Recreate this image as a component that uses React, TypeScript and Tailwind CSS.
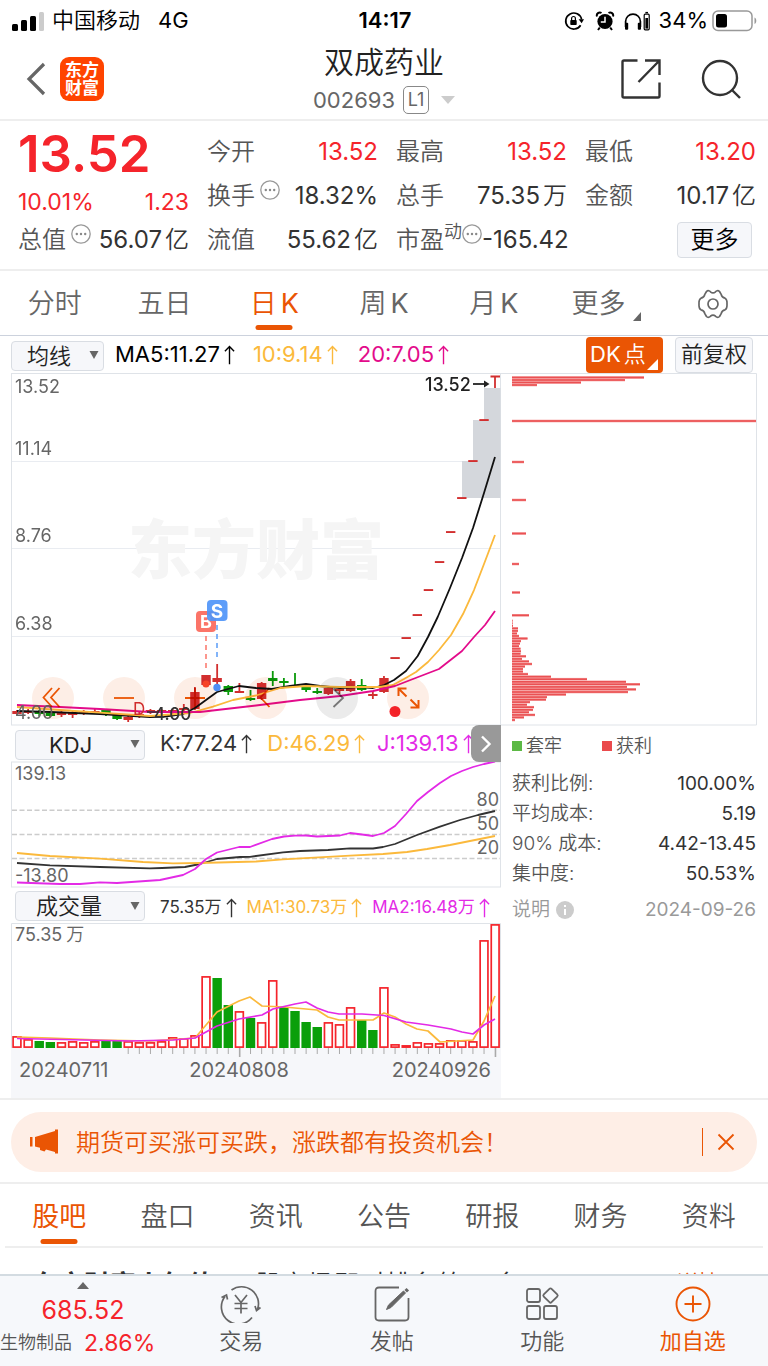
import React from 'react';

type Bar = [kind: 'r' | 'g', top: number];
type Candle = [index: number, kind: 'r' | 'g', bodyTop: number, bodyBottom: number, high: number, low: number];

const STEP = 11.12;
const px = (i: number) => 17 + STEP * i;

const RED = '#d22f2f';
const GREEN = '#0a9a0a';

const VOLUME: Bar[] = [
  ['r', 1036], ['r', 1039], ['g', 1041], ['g', 1042], ['r', 1042], ['r', 1041], ['r', 1042], ['r', 1041],
  ['g', 1041], ['g', 1041], ['r', 1041], ['r', 1042], ['r', 1042], ['r', 1041], ['r', 1037], ['r', 1038],
  ['r', 1035], ['r', 976], ['g', 978], ['g', 1005], ['r', 1011], ['g', 1018], ['r', 1022], ['r', 980],
  ['g', 1007], ['g', 1011], ['g', 1022], ['g', 1027], ['r', 1022], ['r', 1024], ['r', 1007], ['g', 1020],
  ['g', 1030], ['r', 987], ['r', 1044], ['r', 1045], ['r', 1042], ['r', 1043], ['r', 1043], ['r', 1040],
  ['r', 1040], ['r', 1041], ['r', 940], ['r', 924],
];

const CANDLES: Candle[] = [
  [0, 'r', 711, 714, 710, 715], [1, 'r', 711, 713, 709, 714], [2, 'g', 711, 714, 710, 716],
  [3, 'g', 713, 716, 712, 717], [4, 'r', 713, 715, 711, 717], [5, 'r', 713, 715, 711, 718],
  [6, 'r', 711, 713, 710, 715], [7, 'r', 711, 713, 709, 714], [8, 'g', 710, 715, 709, 716],
  [9, 'g', 715, 719, 713, 720], [10, 'r', 717, 720, 715, 722], [11, 'r', 714, 716, 712, 718],
  [12, 'r', 710, 712, 709, 714], [13, 'r', 710, 712, 709, 714], [14, 'r', 710, 713, 709, 714],
  [15, 'r', 708, 710, 704, 712], [16, 'r', 692, 709, 687, 710], [17, 'r', 675, 685, 675, 686],
  [18, 'r', 678, 682, 664, 691], [19, 'g', 686, 692, 685, 695], [20, 'r', 691, 693, 683, 693],
  [21, 'g', 698, 700, 690, 701], [22, 'r', 683, 699, 682, 700], [23, 'g', 678, 681, 671, 686],
  [24, 'g', 681, 683, 678, 687], [25, 'g', 685, 687, 673, 687], [26, 'g', 687, 690, 685, 692],
  [27, 'g', 691, 693, 688, 694], [28, 'r', 688, 694, 687, 695], [29, 'r', 689, 691, 686, 694],
  [30, 'r', 681, 691, 679, 692], [31, 'g', 685, 690, 679, 691], [32, 'r', 694, 696, 691, 699],
  [33, 'r', 678, 692, 676, 693],
];

const LIMIT_UP = [658, 638, 615, 590, 562, 532, 498, 461, 420];

const CHIPS: [number, number][] = [
  [377.5, 132], [380, 113], [382.5, 69], [385, 25], [421, 244], [462, 12], [500, 14], [533.5, 14],
  [564, 7], [592.5, 8], [615.3, 17], [620.7, 0.6], [623.3, 0.6], [625.8, 1], [628.4, 6], [630.9, 6],
  [633.5, 5], [636, 7], [638.5, 15.5], [641.1, 9], [643.6, 8], [646.2, 7], [648.7, 8.5], [651.3, 9],
  [653.8, 8.5], [656.3, 14], [658.9, 10], [661.4, 17], [664, 20], [666.5, 13], [669, 11], [671.6, 11],
  [674.1, 16], [676.7, 39], [679.2, 75], [681.8, 114], [684.3, 128], [686.9, 115], [689.4, 124],
  [692, 116], [694.5, 54], [697.1, 35], [699.6, 34], [702.1, 18], [704.7, 15], [707.2, 22],
  [709.8, 21], [712.3, 17], [714.9, 23], [717.4, 12], [720, 3],
];

const MORE_DOTS = (
  <svg viewBox="1 1 20 20" className="h-5 w-5 shrink-0" fill="none" aria-hidden="true">
    <circle cx="11" cy="11" r="9.2" stroke="#999" strokeWidth="1.3" />
    <circle cx="6.8" cy="11" r="1.2" fill="#888" />
    <circle cx="11" cy="11" r="1.2" fill="#888" />
    <circle cx="15.2" cy="11" r="1.2" fill="#888" />
  </svg>
);

function Caret() {
  return (
    <svg viewBox="0 0 10 9" className="pointer-events-none absolute right-[5px] top-1/2 h-[9px] w-[10px] -translate-y-1/2" aria-hidden="true">
      <path d="M0.5 0.5H9.5L5 8.5Z" fill="#666" />
    </svg>
  );
}

function Picker({ label, options, className, selectClass }: { label: string; options: string[]; className: string; selectClass: string }) {
  return (
    <label className={'relative block h-[30px] shrink-0 ' + className}>
      <span className="sr-only">{label}</span>
      <select className={'h-full w-full appearance-none rounded-[4px] border border-[#d9dde3] bg-[#f6f7fa] text-[#222] leading-7 outline-none ' + selectClass}>
        {options.map((o) => (
          <option key={o}>{o}</option>
        ))}
      </select>
      <Caret />
    </label>
  );
}

function UpArrow() {
  return (
    <svg viewBox="0 0 12 22" className="ml-1 inline-block h-[22px] w-[11px] shrink-0" fill="none" stroke="currentColor" strokeWidth="1.5" aria-hidden="true">
      <path d="M6 21V2M1 7L6 1.8L11 7" />
    </svg>
  );
}

function Stat({ label, value, unit, tone = 'text-[#333]', note, dots }: { label: string; value: string; unit?: string; tone?: string; note?: string; dots?: boolean }) {
  return (
    <div className="flex h-11 items-center justify-between whitespace-nowrap">
      <dt className="flex items-center text-2xl font-[350] text-[#555]">
        {label}
        {note && <span className="-mt-4 text-lg">{note}</span>}
        {dots && <span className={note ? '-mt-3' : '-mt-3 ml-[5px]'}>{MORE_DOTS}</span>}
      </dt>
      <dd className={'text-[24px] ' + tone}>
        {value}
        {unit && <span className="ml-[3px] font-[350]">{unit}</span>}
      </dd>
    </div>
  );
}

function StatusBar() {
  return (
    <div className="flex h-[41px] items-center justify-between pl-3 pr-[10px] text-[22px] text-black">
      <div className="flex flex-1 items-center">
        <svg viewBox="0 0 32 20" className="mr-2 h-5 w-8" aria-hidden="true">
          <rect x="0" y="13" width="6" height="7" rx="1.5" />
          <rect x="9" y="9" width="6" height="11" rx="1.5" />
          <rect x="18" y="5" width="6" height="15" rx="1.5" />
          <rect x="27" y="1" width="5" height="19" rx="1.5" fill="#ccc" />
        </svg>
        <span className="font-[350]">中国移动</span>
        <span className="ml-[18px]">4G</span>
      </div>
      <span className="font-semibold">14:17</span>
      <div className="flex flex-1 items-center justify-end">
        <svg viewBox="0 0 20 20" className="h-5 w-5" fill="none" stroke="#000" strokeWidth="1.7" aria-hidden="true">
          <path d="M16.6 14.2A8 8 0 1 1 17.6 8.5" />
          <path d="M14.6 8.2L20 8.2L17.6 12.2Z" fill="#000" stroke="none" />
          <rect x="6.3" y="9" width="6.4" height="5" rx="0.8" fill="#000" stroke="none" />
          <path d="M7.6 9V7.4a1.9 1.9 0 0 1 3.8 0V9" strokeWidth="1.2" />
        </svg>
        <svg viewBox="0 0 20 20" className="ml-[11px] h-5 w-5" aria-hidden="true">
          <circle cx="10" cy="10.5" r="7.6" />
          <path d="M2 5.5A3 3 0 0 1 6.5 2M18 5.5A3 3 0 0 0 13.5 2M4.8 16.5L3 19M15.2 16.5L17 19" stroke="#000" strokeWidth="2" fill="none" />
          <path d="M10 5.8V11H5.8" stroke="#fff" strokeWidth="1.5" fill="none" />
        </svg>
        <svg viewBox="0 0 28 20" className="ml-2 h-5 w-7" fill="none" stroke="#000" aria-hidden="true">
          <path d="M2.6 16V10.5a7.4 7.4 0 0 1 14.8 0V16" strokeWidth="1.7" />
          <rect x="2" y="11.8" width="3.2" height="7" rx="1" fill="#000" stroke="none" />
          <rect x="14.8" y="11.8" width="3.2" height="7" rx="1" fill="#000" stroke="none" />
          <rect x="21.2" y="3.2" width="5" height="15.6" rx="1" strokeWidth="1.2" />
          <rect x="22.4" y="7" width="2.6" height="10.6" fill="#000" stroke="none" />
          <path d="M22.4 1.6H25" strokeWidth="1.4" />
        </svg>
        <span className="ml-2">34%</span>
        <svg viewBox="0 0 46 22" className="ml-1 h-[22px] w-[46px]" fill="none" aria-hidden="true">
          <rect x="1" y="1" width="39" height="19.5" rx="5" stroke="#999" strokeWidth="1.5" />
          <rect x="4" y="4" width="11" height="13.5" rx="2.5" fill="#000" />
          <path d="M42.5 7.5c2.4 1 2.4 5.5 0 6.5Z" fill="#999" />
        </svg>
      </div>
    </div>
  );
}

function Header() {
  return (
    <header className="flex h-20 items-center border-b-2 border-[#eee] pb-[3px] pl-[26px] pr-[26px]">
      <div className="flex flex-1 items-center">
        <button type="button" aria-label="返回" className="mr-[14px]">
          <svg viewBox="0 0 20 34" className="h-[34px] w-5" fill="none" stroke="#666" strokeWidth="3.2" aria-hidden="true">
            <path d="M18 2L3 17L18 32" />
          </svg>
        </button>
        <div className="grid h-11 w-11 place-content-center rounded-[9px] bg-[#ff4400] text-center text-[17px] font-bold leading-[18px] text-white">
          <span>东方</span>
          <span>财富</span>
        </div>
      </div>
      <div className="flex flex-col items-center">
        <h1 className="text-[30px] font-[350] leading-9 text-[#222]">双成药业</h1>
        <button type="button" className="mt-[6px] flex h-7 items-center text-[22px] leading-7 text-[#666]">
          002693
          <span className="ml-2 flex h-7 w-[26px] items-center justify-center rounded-[5px] border border-[#888] text-lg">L1</span>
          <svg viewBox="0 0 14 8" className="ml-3 h-2 w-[14px]" aria-hidden="true">
            <path d="M0 0H14L7 8Z" fill="#ccc" />
          </svg>
        </button>
      </div>
      <div className="flex flex-1 items-center justify-end gap-[38px] text-[#333]">
        <button type="button" aria-label="分享">
          <svg viewBox="0 0 42 42" className="h-[42px] w-[42px]" fill="none" stroke="currentColor" strokeWidth="2.4" aria-hidden="true">
            <path d="M17.5 2.5H4Q2.5 2.5 2.5 4V38Q2.500 39.500 4 39.500H38Q39.500 39.500 39.500 38V24.500M25 2.500H39.500V17M39.500 2.500L18.500 24" />
          </svg>
        </button>
        <button type="button" aria-label="搜索">
          <svg viewBox="0 0 42 42" className="h-[42px] w-[42px]" fill="none" stroke="currentColor" strokeWidth="2.4" aria-hidden="true">
            <circle cx="20" cy="20" r="17" />
            <path d="M31.500 31.500L40 40" />
          </svg>
        </button>
      </div>
    </header>
  );
}

function Quote() {
  return (
    <section className="grid grid-cols-4 gap-x-[18px] border-b-2 border-[#eee] pb-[7px] pl-[18px] pr-3 pt-[9px]">
      <div>
        <div className="h-[50px] text-[51px] font-semibold leading-[48px] text-[#f5242b]">13.52</div>
        <div className="flex h-[38px] items-end justify-between text-[23px] leading-8 text-[#f5242b]">
          <span>10.01%</span>
          <span>1.23</span>
        </div>
        <dl>
          <Stat label="总值" dots value="56.07" unit="亿" />
        </dl>
      </div>
      <dl>
        <Stat label="今开" value="13.52" tone="text-[#f5242b]" />
        <Stat label="换手" dots value="18.32%" />
        <Stat label="流值" value="55.62" unit="亿" />
      </dl>
      <dl>
        <Stat label="最高" value="13.52" tone="text-[#f5242b]" />
        <Stat label="总手" value="75.35" unit="万" />
        <Stat label="市盈" note="动" dots value="-165.42" />
      </dl>
      <div>
        <dl>
          <Stat label="最低" value="13.20" tone="text-[#f5242b]" />
          <Stat label="金额" value="10.17" unit="亿" />
        </dl>
        <div className="flex h-11 items-center justify-end pr-1">
          <button type="button" className="h-9 w-[75px] rounded-[4px] border border-[#d9dde3] bg-[#f6f7fa] text-2xl font-[350] leading-8 text-black">更多</button>
        </div>
      </div>
    </section>
  );
}

function PeriodTabs() {
  const tab = 'flex h-full items-center justify-center pt-[2px] text-[27px] font-[350]';
  return (
    <nav className="grid h-[65px] grid-cols-7 border-b border-[#ccd2dd] text-[#666]">
      <button type="button" className={tab}>分时</button>
      <button type="button" className={tab}>五日</button>
      <button type="button" aria-current="true" className={tab + ' relative text-[#ea5504]'}>
        日<span className="ml-1 font-normal">K</span>
        <span className="absolute bottom-[5px] left-1/2 h-[5px] w-[37px] -translate-x-1/2 rounded-full bg-[#ea5504]" />
      </button>
      <button type="button" className={tab}>周<span className="ml-1 font-normal">K</span></button>
      <button type="button" className={tab}>月<span className="ml-1 font-normal">K</span></button>
      <button type="button" className={tab + ' pl-[6px]'}>
        更多
        <svg viewBox="0 0 8 9" className="ml-2 mt-6 h-[9px] w-2" aria-hidden="true">
          <path d="M8 0V9H0Z" fill="#666" />
        </svg>
      </button>
      <button type="button" aria-label="设置" className={tab}>
        <svg viewBox="0 0 32 32" className="h-8 w-8" fill="none" stroke="currentColor" strokeWidth="1.700" strokeLinejoin="round" aria-hidden="true">
          <path d="M9.500 3.500C11 2 12.800 3 13.500 3.800C15 5.200 17 5.200 18.500 3.800C19.200 3 21 2 22.500 3.500L24.200 6.400C24.600 8.500 25.500 9.800 28 10.200C29.500 11 30.200 13 30 16C30.200 19 29.500 21 28 21.800C25.500 22.200 24.600 23.500 24.200 25.600L22.500 28.500C21 30 19.200 29 18.500 28.200C17 26.800 15 26.800 13.500 28.200C12.800 29 11 30 9.500 28.500L7.800 25.600C7.400 23.500 6.500 22.200 4 21.800C2.500 21 1.800 19 2 16C1.800 13 2.500 11 4 10.200C6.500 9.800 7.400 8.500 7.800 6.400Z" />
          <circle cx="16" cy="16" r="5" />
        </svg>
      </button>
    </nav>
  );
}

function PriceChart() {
  const tool = 'grid h-[42px] w-[42px] place-items-center rounded-full mix-blend-multiply text-[#ea5504]';
  return (
    <div className="relative isolate">
      <svg viewBox="11 373 490 353" className="block h-auto w-full" role="img" aria-label="日K线图">
        <rect x="11.500" y="373.500" width="489" height="351.500" fill="#fff" stroke="#dfe3e8" />
        <path d="M12 461.500H500M12 548.500H500M12 636.500H500" stroke="#e9ecf1" strokeWidth="1.200" />
        <text x="128" y="573" fontSize="64" fontWeight="900" fill="#f5f5f5">东方财富</text>
        <path d="M484 388H500.500V498H462V461H473V420H484Z" fill="#d4d7dc" />
        <g fill="#666" fontSize="18">
          <text x="15" y="393">13.52</text>
          <text x="15" y="455">11.14</text>
          <text x="15" y="542">8.76</text>
          <text x="15" y="630">6.38</text>
        </g>
        {CANDLES.map(([i, kind, top, bottom, high, low]) => (
          <g key={i} fill={kind === 'r' ? RED : GREEN}>
            <rect x={px(i) - 4.7} y={top} width="9.400" height={bottom - top} />
            <rect x={px(i) - 0.9} y={high} width="1.800" height={low - high} />
          </g>
        ))}
        {LIMIT_UP.map((y, n) => (
          <rect key={y} x={px(34 + n) - 4.7} y={y - 0.9} width="9.400" height="1.900" fill={RED} />
        ))}
        <path d="M490.500 376.500H500M495 376V388" stroke={RED} strokeWidth="1.800" />
        <g fill="none" strokeWidth="1.800" strokeLinejoin="round">
          <polyline stroke="#111" points="17,711 50,712 100,714 150,717 165,716.500 183,714 195,708 206,700 217,692 228,689 239,686 256,688 272,689 290,686 306,684 320,686 340,688 360,687 373,688 384,685 394,680 406,671 417.700,656 428,637 437.700,617 450,588 462,558 473,528 484,493 495,457" />
          <polyline stroke="#fbb93c" points="17,707 60,710 100,712.700 150,716 190,713 213,706.700 233,700 256,695.500 280,688 306,686 340,687 379,687 393,685 404,679 416,672 428,662 439,650 451,635 463,614 474,590 484,564 495,535" />
          <polyline stroke="#e30b8b" points="17,705 60,707 100,709 150,712 200,712 217,710 256,705.500 300,700 340,696 373,691 395,686 413,679 439,669 462,651 474,637 485,625 495,611" />
        </g>
        <text x="15" y="719" fontSize="18" fill="#666">4.00</text>
        <path d="M206 636V670" stroke="#fb7468" strokeWidth="1.500" strokeDasharray="5 4" />
        <path d="M217 625V660" stroke="#5a9cf8" strokeWidth="1.500" strokeDasharray="5 4" />
        <circle cx="206" cy="684" r="3.500" fill="#f8482b" />
        <circle cx="217" cy="687.500" r="3.700" fill="#4d8ef5" />
        <rect x="196" y="611" width="20" height="21" rx="4" fill="#fb7468" />
        <text x="206" y="628" fontSize="18" fontWeight="700" textAnchor="middle" fill="#fff">B</text>
        <rect x="207" y="600" width="20.500" height="21" rx="4" fill="#4f95f8" fillOpacity="0.920" />
        <text x="217" y="617.500" fontSize="19" fontWeight="700" textAnchor="middle" fill="#fff">S</text>
        <text x="133" y="715" fontSize="17" fill={RED}>D</text>
        <path d="M147 712H158" stroke="#333" strokeWidth="1.500" />
        <text x="154" y="720" fontSize="17" fontWeight="500" fill="#333">4.00</text>
        <text x="425" y="391" fontSize="18" fontWeight="500" fill="#222">13.52</text>
        <path d="M473 384H486" stroke="#222" strokeWidth="1.800" />
        <path d="M484 380.500L489.500 384L484 387.500Z" fill="#222" />
        <circle cx="395" cy="711.500" r="5.500" fill="#f5242b" />
      </svg>
      <div className="absolute bottom-[7px] left-[21px] flex gap-[29px]">
        <button type="button" aria-label="最早" className={tool + ' bg-[#fdeee6]'}>
          <svg viewBox="0 0 42 42" className="h-[42px] w-[42px]" fill="none" stroke="currentColor" strokeWidth="1.800"><path d="M20 11L11.500 20.500L20 30M27.500 11L19 20.500L27.500 30" /></svg>
        </button>
        <button type="button" aria-label="缩小" className={tool + ' bg-[#fdeee6]'}>
          <svg viewBox="0 0 42 42" className="h-[42px] w-[42px]" fill="none" stroke="currentColor" strokeWidth="1.800"><path d="M11 21H31" /></svg>
        </button>
        <button type="button" aria-label="放大" className={tool + ' bg-[#fdeee6]'}>
          <svg viewBox="0 0 42 42" className="h-[42px] w-[42px]" fill="none" stroke="currentColor" strokeWidth="1.800"><path d="M11 21H31M21 11V31" /></svg>
        </button>
        <button type="button" aria-label="向前" className={tool + ' bg-[#fdeee6]'}>
          <svg viewBox="0 0 42 42" className="h-[42px] w-[42px]" fill="none" stroke="currentColor" strokeWidth="1.800"><path d="M24.500 11L15.500 20.500L24.500 30" /></svg>
        </button>
        <button type="button" aria-label="向后" className={tool + ' bg-[#ebebeb]'}>
          <svg viewBox="0 0 42 42" className="h-[42px] w-[42px]" fill="none" stroke="#777" strokeWidth="1.800"><path d="M17.500 12L27 21L17.500 30" /></svg>
        </button>
        <button type="button" aria-label="全屏" className={tool + ' bg-[#fdeee6]'}>
          <svg viewBox="0 0 42 42" className="h-[42px] w-[42px]" fill="none" stroke="currentColor" strokeWidth="2"><path d="M11.500 19V11.500H19.500M11.500 11.500L19.500 19.500M31.500 23V30.500H23.500M31.500 30.500L23.500 22.500" /></svg>
        </button>
      </div>
    </div>
  );
}

function KdjChart() {
  return (
    <svg viewBox="11 761 490 127" className="block h-auto w-full" role="img" aria-label="KDJ指标图">
      <rect x="11.500" y="762" width="489" height="125" fill="#fff" stroke="#dfe3e8" />
      <path d="M12 810.300H500M12 834.500H500M12 858.500H500" stroke="#ccc" strokeWidth="1.500" strokeDasharray="5 2.500" />
      <g fill="#666" fontSize="18">
        <text x="15" y="780">139.13</text>
        <text x="15" y="882">-13.80</text>
        <text x="499" y="806" textAnchor="end">80</text>
        <text x="499" y="830" textAnchor="end">50</text>
        <text x="499" y="854" textAnchor="end">20</text>
      </g>
      <g fill="none" strokeWidth="1.800" strokeLinejoin="round">
        <polyline stroke="#333" points="17,863 50,865.300 100,867 150,868.300 162,868 185,867 200,864 217,859 240,857 250,856.800 283,852.300 300,851 328,850 350,848.300 373,848.500 383,847 395,844 417,835 440,826.600 460,820 478,815 495,811" />
        <polyline stroke="#fbb93c" points="17,853 50,856 100,858.700 143,862 173,863.300 200,863 256,861.500 283,859.300 350,855.700 383,854 407,852 427,849 450,845 495,836" />
        <polyline stroke="#e32ae6" points="17,882.500 60,884 80,884 100,882.300 117,883 160,880 183,875 195,869 206,859 217,852.500 239,847 250,847 272,839 284,836.500 295,835.700 306,835.500 317,836.500 340,835.500 350,833 362,834.500 373,836 384,833 395,826 406,814 417,801 428,792 440,783 451,776 462,771 473,767 484,764 495,761.500" />
      </g>
    </svg>
  );
}

function VolumeChart() {
  return (
    <svg viewBox="11 923 490 175" className="block h-auto w-full" role="img" aria-label="成交量图">
      <rect x="11" y="1048" width="490" height="50" fill="#f6f7fa" />
      <path d="M11.500 1048V923.500H500.500V1048" fill="#fff" stroke="#dfe3e8" />
      <text x="15" y="941" fontSize="18" fill="#666">75.35<tspan dx="4" fontWeight="350">万</tspan></text>
      {VOLUME.map(([kind, top], i) =>
        kind === 'r' ? (
          <rect key={i} x={px(i) - 3.9} y={top + 0.9} width="7.800" height={1046.200 - top} fill="#fff" stroke="#f5242b" strokeWidth="1.700" />
        ) : (
          <rect key={i} x={px(i) - 4.7} y={top} width="9.400" height={1048 - top} fill="#0a9f0a" />
        ),
      )}
      <g fill="none" strokeWidth="1.700" strokeLinejoin="round">
        <polyline stroke="#fbb93c" points="17,1037 50,1038 100,1040 150,1041 195,1038 206,1025 217,1012 239,1001 250,997 262,1006 284,1007 306,1009 317,1010 328,1017 339,1020 373,1020 384,1013 395,1017 406,1024 417,1029 428,1031 440,1042 473,1040 484,1021 495,996" />
        <polyline stroke="#e32ae6" points="17,1038.500 130,1041 173,1040 195,1038 217,1026 239,1019 262,1015 273,1009 295,1004 306,1002 317,1008 328,1012 339,1014 362,1014 384,1015.500 406,1022 428,1025 451,1029 462,1032 473,1034 484,1025 495,1019" />
      </g>
      {VOLUME.map((_, i) =>
        i < 10 ? null : <rect key={i} x={px(i) - 0.5} y="1048" width={i === 20 || i === 43 ? 1.6 : 1} height={i === 20 || i === 43 ? 9 : 6} fill="#aaa" />,
      )}
      <g fill="#666" fontSize="20">
        <text x="19" y="1077">20240711</text>
        <text x="239" y="1077" textAnchor="middle">20240808</text>
        <text x="491" y="1077" textAnchor="end">20240926</text>
      </g>
    </svg>
  );
}

function CostPanel() {
  const rows = [
    ['获利比例:', '100.00%'],
    ['平均成本:', '5.19'],
    ['90% 成本:', '4.42-13.45'],
    ['集中度:', '50.53%'],
  ];
  return (
    <aside className="min-w-0 flex-[256]">
      <svg viewBox="501 373 256 353" className="block h-auto w-full" role="img" aria-label="筹码分布图">
        <path d="M501 373.500H756.500V725H501" fill="none" stroke="#dfe3e8" />
        {CHIPS.map(([y, w]) => (
          <g key={y}>
            <rect x="512" y={y - 1.3} width={w} height="2.600" fill="#f6a0a0" />
            <rect x="512" y={y - 0.8} width={w} height="1.600" fill="#ea5153" />
          </g>
        ))}
      </svg>
      <div className="pl-[11px] pr-px">
        <div className="flex h-[39px] items-center gap-10 text-lg font-[350] text-[#555]">
          <span className="flex items-center gap-1"><span className="h-[10px] w-[10px] bg-[#5cb945]" />套牢</span>
          <span className="flex items-center gap-1"><span className="h-[10px] w-[10px] bg-[#ea4a4c]" />获利</span>
        </div>
        <dl className="mt-1">
          {rows.map(([k, v]) => (
            <div key={k} className="flex h-[30px] items-center justify-between whitespace-nowrap text-[19px]">
              <dt className="font-[350] text-[#555]">{k}</dt>
              <dd className="text-[#333]">{v}</dd>
            </div>
          ))}
        </dl>
        <div className="mt-[6px] flex h-[30px] items-center justify-between text-[19px] text-[#999]">
          <span className="flex items-center gap-[6px] font-[350]">
            说明
            <svg viewBox="0 0 18 18" className="h-[18px] w-[18px]" aria-hidden="true">
              <circle cx="9" cy="9" r="9" fill="#ccc" />
              <path d="M9 4V6M9 8V14" stroke="#fff" strokeWidth="2" />
            </svg>
          </span>
          <span>2024-09-26</span>
        </div>
      </div>
    </aside>
  );
}

function Charts() {
  return (
    <section className="pl-[11px] pr-[11px]">
      <div className="flex h-[37px] items-center justify-between whitespace-nowrap pr-1">
        <div className="flex items-center text-[22px]">
          <Picker label="主图指标" options={['均线']} className="w-[93px]" selectClass="pl-[15px] text-[22px] font-[350]" />
          <span className="ml-[11px] flex items-center text-black">MA5:11.27<UpArrow /></span>
          <span className="ml-[18px] flex items-center text-[#fbb93c]">10:9.14<UpArrow /></span>
          <span className="ml-5 flex items-center text-[#e30b8b]">20:7.05<UpArrow /></span>
        </div>
        <div className="flex gap-3">
          <button type="button" className="relative flex h-9 w-[77px] items-center rounded-[4px] bg-[#ea5504] pl-1 text-[22px] font-[350] text-white">
            <span className="mr-[3px] font-normal">DK</span>点
            <svg viewBox="0 0 11 11" className="absolute bottom-[3px] right-[5px] h-[11px] w-[11px]" aria-hidden="true"><path d="M11 0V11H0Z" fill="#fff" /></svg>
          </button>
          <button type="button" className="h-9 w-[78px] rounded-[4px] border border-[#d9dde3] bg-[#f6f7fa] text-[22px] font-[350] text-[#222]">前复权</button>
        </div>
      </div>
      <div className="flex">
        <div className="min-w-0 flex-[490]">
          <PriceChart />
          <div className="relative flex h-[35px] items-center whitespace-nowrap pl-1 text-[22px]">
            <Picker label="副图指标一" options={['KDJ']} className="w-[130px]" selectClass="pl-[33px] text-[22px]" />
            <span className="ml-[15px] flex items-center text-[#333]">K:77.24<UpArrow /></span>
            <span className="ml-[15px] flex items-center text-[#fbb93c]">D:46.29<UpArrow /></span>
            <span className="ml-3 flex items-center text-[#e32ae6]">J:139.13<UpArrow /></span>
            <button type="button" aria-label="收起筹码" className="absolute -top-px right-0 grid h-[37px] w-[30px] place-items-center rounded-l-lg bg-[#999]">
              <svg viewBox="0 0 12 18" className="h-[18px] w-3" fill="none" stroke="#fff" strokeWidth="2.400" aria-hidden="true"><path d="M2 1.500L9.500 9L2 16.500" /></svg>
            </button>
          </div>
          <KdjChart />
          <div className="flex h-[35px] items-center whitespace-nowrap pl-1 text-[17px]">
            <Picker label="副图指标二" options={['成交量']} className="w-[130px]" selectClass="pl-5 text-[22px] font-[350]" />
            <span className="ml-[15px] flex items-center pt-1 text-[#333]">75.35万<UpArrow /></span>
            <span className="ml-[10px] flex items-center pt-1 text-[#fbb93c]">MA1:30.73万<UpArrow /></span>
            <span className="ml-[10px] flex items-center pt-1 text-[#e32ae6]">MA2:16.48万<UpArrow /></span>
          </div>
          <VolumeChart />
        </div>
        <CostPanel />
      </div>
    </section>
  );
}

function Promo() {
  return (
    <section className="border-y-2 border-[#eee] px-[11px] pb-[10px] pt-3">
      <div className="flex h-[60px] items-center rounded-full bg-[#feeee6] pl-[18px] pr-[22px] text-[#ea5504]">
        <svg viewBox="0 0 30 28" className="h-7 w-[30px] shrink-0" fill="currentColor" aria-hidden="true">
          <path d="M1 9H3.500V18.500H1ZM6 9L26 3V1.500H29V25.500H26V24L17 21.500L15.500 23.500L11 22V19.800L6 18.500Z" />
        </svg>
        <a href="#promo" className="ml-[17px] flex-1 pt-px text-2xl font-[350]">期货可买涨可买跌，涨跌都有投资机会！</a>
        <span className="h-7 w-px bg-[#ea5504]" />
        <button type="button" aria-label="关闭" className="ml-[14px]">
          <svg viewBox="0 0 18 18" className="h-[18px] w-[18px]" fill="none" stroke="currentColor" strokeWidth="1.800" aria-hidden="true"><path d="M1.500 1.500L16.500 16.500M16.500 1.500L1.500 16.500" /></svg>
        </button>
      </div>
    </section>
  );
}

function InfoTabs() {
  const tabs = ['股吧', '盘口', '资讯', '公告', '研报', '财务', '资料'];
  return (
    <nav className="mx-[5px] grid h-16 grid-cols-7 border-b-2 border-[#eee]">
      {tabs.map((t, i) => (
        <a
          key={t}
          href={'#tab-' + i}
          className={
            i === 0
              ? 'relative flex items-center justify-center pt-[5px] text-[27px] text-[#ea5504]'
              : 'flex items-center justify-center pt-[5px] text-[27px] font-[350] text-[#555]'
          }
        >
          {t}
          {i === 0 && <span className="absolute bottom-[2px] left-1/2 h-[5px] w-[37px] -translate-x-1/2 rounded-full bg-[#ea5504]" />}
        </a>
      ))}
    </nav>
  );
}

function BottomBar() {
  const item = 'flex flex-1 flex-col items-center text-[22px] font-[350] leading-7 text-[#555]';
  return (
    <footer className="sticky bottom-0 flex h-[92px] border-t-2 border-[#d3dbe1] bg-[#f6f8fb]">
      <a href="#sector" className="flex w-[166px] flex-col items-center">
        <svg viewBox="0 0 12 7" className="mt-[6px] h-[7px] w-3" aria-hidden="true"><path d="M6 0L12 7H0Z" fill="#666" /></svg>
        <span className="mt-[7px] text-[25px] leading-7 text-[#f5242b]">685.52</span>
        <span className="mt-[5px] flex items-center gap-3 self-start whitespace-nowrap text-lg font-[350] leading-7 text-[#555]">
          生物制品
          <span className="text-[23px] font-normal text-[#f5242b]">2.86%</span>
        </span>
      </a>
      <button type="button" className={item}>
        <svg viewBox="0 0 42 38" className="mb-1 mt-[9px] h-[38px] w-[42px]" fill="none" stroke="#666" strokeWidth="1.700" aria-hidden="true">
          <path d="M11.500 5A17 17 0 0 1 37.500 24.500M40.500 22.500L36.500 25.500L35 21M32 32.500A17 17 0 0 1 5 11.500M1.500 12.500L6.500 10L7.500 14.500" />
          <path d="M15 10L21 17.500L27 10M21 17.500V28.500M14.500 18.500H27.500M14.500 23.500H27.500" />
        </svg>
        交易
      </button>
      <button type="button" className={item}>
        <svg viewBox="0 0 38 38" className="mb-1 mt-[9px] h-[38px] w-[38px]" fill="none" stroke="#666" strokeWidth="1.800" aria-hidden="true">
          <path d="M26 2.500H6Q2.500 2.500 2.500 6V32Q2.500 35.500 6 35.500H32Q35.500 35.500 35.500 32V13" />
          <path d="M13.500 24.500L15.500 20L30.500 6L32.500 8L18 22.500Z" fill="#666" strokeWidth="1" />
          <path d="M32.500 4L35 6.500" strokeWidth="3" />
        </svg>
        发帖
      </button>
      <button type="button" className={item}>
        <svg viewBox="0 0 36 38" className="mb-1 mt-[9px] h-[38px] w-9" fill="none" stroke="#666" strokeWidth="1.800" aria-hidden="true">
          <rect x="3" y="4" width="13" height="13" rx="2" />
          <rect x="3" y="21" width="13" height="13" rx="2" />
          <rect x="20" y="21" width="13" height="13" rx="2" />
          <rect x="21" y="5" width="11" height="11" rx="1.500" transform="rotate(45 26.500 10.500)" />
        </svg>
        功能
      </button>
      <button type="button" className="flex flex-1 flex-col items-center text-[22px] leading-7 text-[#ea5504]">
        <svg viewBox="0 0 38 38" className="mb-1 mt-[9px] h-[38px] w-[38px]" fill="none" stroke="currentColor" strokeWidth="1.900" aria-hidden="true">
          <circle cx="19" cy="19" r="16.500" />
          <path d="M10.500 19H27.500M19 10.500V27.500" />
        </svg>
        加自选
      </button>
    </footer>
  );
}

export default function App() {
  return (
    <div className="flex min-h-screen flex-col bg-white font-['Inter','Noto_Sans_CJK_SC',sans-serif]">
      <StatusBar />
      <Header />
      <Quote />
      <PeriodTabs />
      <Charts />
      <Promo />
      <InfoTabs />
      <div className="flex h-[26px] justify-between overflow-hidden whitespace-nowrap pl-8 pr-9 pt-[19px] text-[26px] leading-9 text-[#333]">
        <span>
          <strong className="font-bold">东方财富人气值</strong>
          <span className="ml-6 font-[350]">A股市场即时排名第<span className="text-[#ea5504]">20</span>名</span>
        </span>
        <a href="#rank" className="text-[22px] font-[350] leading-8 text-[#ea5504]">详情»</a>
      </div>
      <BottomBar />
    </div>
  );
}
